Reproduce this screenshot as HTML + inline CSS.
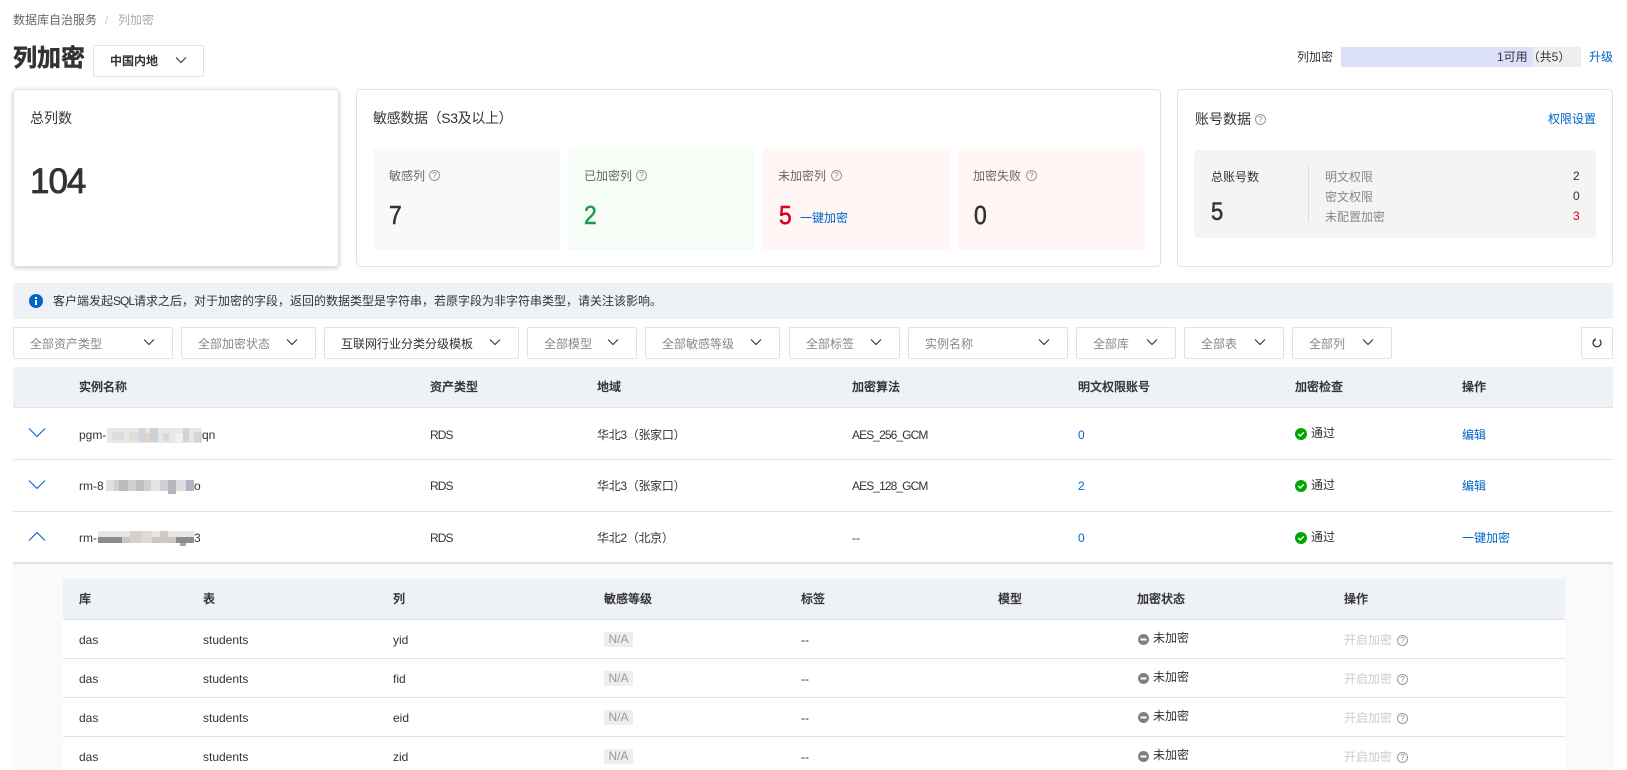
<!DOCTYPE html>
<html lang="zh-CN"><head><meta charset="utf-8"><title>列加密</title>
<style>
html,body{margin:0;padding:0;background:#fff}
body{width:1627px;height:770px;overflow:hidden;position:relative;font:12px/20px "Liberation Sans","Noto Sans CJK SC",sans-serif;color:#333}
.a{position:absolute;box-sizing:border-box}
.t{position:absolute;white-space:nowrap;height:20px;line-height:20px}
.b{font-weight:500;-webkit-text-stroke:.25px #333}
.l{color:#0064c8}
.card{position:absolute;box-sizing:border-box;background:#fff;border:1px solid #e3e3e3;border-radius:4px}
.sel{position:absolute;box-sizing:border-box;top:327px;height:32px;border:1px solid #e3e3e3;border-radius:2px;background:#fff;color:#888;line-height:32px;padding-left:16px;white-space:nowrap}
.sel svg{position:absolute;right:17px;top:10px}
.h{position:absolute;box-sizing:border-box;width:11px;height:11px;border:1px solid #999;border-radius:50%;color:#888;font-size:8px;line-height:9px;text-align:center}
.sub{position:absolute;top:149px;height:101px;width:187px}
.lb{color:#666}
.v{font-size:26px;-webkit-text-stroke:.55px currentColor;transform:scaleX(.88);transform-origin:left center}
.n{letter-spacing:-.9px}
.s{position:absolute;box-sizing:border-box;width:11px;height:11px;border-radius:50%}
.tag{position:absolute;left:604px;width:29px;height:15px;background:#eee;color:#999;line-height:15px;text-align:center;border-radius:1px}
.d{color:#ccc}
.rl{position:absolute;height:1px;background:#e3e3e3}
.r{letter-spacing:-.3px}
</style></head><body>

<div class="t" style="left:13px;top:10px;color:#666">数据库自治服务</div>
<div class="t" style="left:105px;top:10px;color:#ccc">/</div>
<div class="t" style="left:118px;top:10px;color:#aaa">列加密</div>

<div class="t" style="left:13px;top:44px;font-size:24px;line-height:30px;height:30px;font-weight:700;-webkit-text-stroke:.5px #333">列加密</div>
<div class="a" style="left:93px;top:45px;width:111px;height:32px;border:1px solid #e3e3e3;border-radius:2px"></div>
<div class="t b" style="left:110px;top:51px">中国内地</div>
<svg class="a" style="left:175px;top:56px" width="12" height="8" viewBox="0 0 12 8"><path d="M1 1.5l5 5 5-5" fill="none" stroke="#333" stroke-width="1.1"/></svg>

<div class="t" style="left:1297px;top:47px">列加密</div>
<div class="a" style="left:1341px;top:47px;width:240px;height:20px;background:#eee"></div>
<div class="a" style="left:1341px;top:47px;width:192px;height:20px;background:#dde0fb"></div>
<div class="t" style="left:1497px;top:47px">1可用（共5）</div>
<div class="t l" style="left:1589px;top:47px">升级</div>

<!-- card 1 -->
<div class="card" style="left:13px;top:89px;width:326px;height:178px;box-shadow:0 1px 5px rgba(0,0,0,.22)"></div>
<div class="t" style="left:30px;top:108px;font-size:14px">总列数</div>
<div class="t" style="left:30px;top:160px;font-size:35px;line-height:44px;height:44px;letter-spacing:-1px;-webkit-text-stroke:.8px #333">104</div>

<!-- card 2 -->
<div class="card" style="left:356px;top:89px;width:805px;height:178px"></div>
<div class="t" style="left:373px;top:108px;font-size:14px;letter-spacing:-.35px">敏感数据（S3及以上）</div>
<div class="sub" style="left:373px;background:#f9f9f9"></div>
<div class="sub" style="left:568px;background:#f6fdf6"></div>
<div class="sub" style="left:763px;background:#fff6f5"></div>
<div class="sub" style="left:958px;background:#fff6f5"></div>
<div class="t lb" style="left:389px;top:166px">敏感列</div><div class="h" style="left:429px;top:170px">?</div>
<div class="t lb" style="left:584px;top:166px">已加密列</div><div class="h" style="left:636px;top:170px">?</div>
<div class="t lb" style="left:778px;top:166px">未加密列</div><div class="h" style="left:831px;top:170px">?</div>
<div class="t lb" style="left:973px;top:166px">加密失败</div><div class="h" style="left:1026px;top:170px">?</div>
<div class="t v" style="left:389px;top:205px">7</div>
<div class="t v" style="left:584px;top:205px;color:#1d9a52">2</div>
<div class="t v" style="left:779px;top:205px;color:#d9001b">5</div>
<div class="t l" style="left:800px;top:208px">一键加密</div>
<div class="t v" style="left:974px;top:205px">0</div>

<!-- card 3 -->
<div class="card" style="left:1177px;top:89px;width:436px;height:178px"></div>
<div class="t" style="left:1195px;top:109px;font-size:14px">账号数据</div><div class="h" style="left:1255px;top:114px">?</div>
<div class="t l" style="left:1548px;top:109px">权限设置</div>
<div class="a" style="left:1194px;top:150px;width:402px;height:88px;background:#f4f4f4;border-radius:4px"></div>
<div class="t" style="left:1211px;top:167px">总账号数</div>
<div class="t v" style="left:1211px;top:202px;font-size:25px">5</div>
<div class="a" style="left:1308px;top:166px;width:1px;height:56px;background:#ddd"></div>
<div class="t" style="left:1325px;top:167px;color:#888">明文权限</div>
<div class="t" style="left:1325px;top:187px;color:#888">密文权限</div>
<div class="t" style="left:1325px;top:207px;color:#888">未配置加密</div>
<div class="t" style="left:1573px;top:166px">2</div>
<div class="t" style="left:1573px;top:186px">0</div>
<div class="t" style="left:1573px;top:206px;color:#d9001b">3</div>

<!-- alert -->
<div class="a" style="left:13px;top:283px;width:1600px;height:36px;background:#eef1f6"></div>
<svg class="a" style="left:29px;top:294px" width="14" height="14" viewBox="0 0 14 14"><circle cx="7" cy="7" r="7" fill="#0064c8"/><rect x="6" y="6" width="2" height="5" fill="#fff"/><rect x="6" y="3" width="2" height="2" fill="#fff"/></svg>
<div class="t" style="left:53px;top:291px">客户端发起<span style="letter-spacing:-1px">SQL</span>请求之后，对于加密的字段，返回的数据类型是字符串，若原字段为非字符串类型，请关注该影响。</div>

<!-- filters -->
<div class="sel" style="left:13px;width:160px">全部资产类型<svg width="12" height="8" viewBox="0 0 12 8"><path d="M1 1.5l5 5 5-5" fill="none" stroke="#333" stroke-width="1.1"/></svg></div>
<div class="sel" style="left:181px;width:135px">全部加密状态<svg width="12" height="8" viewBox="0 0 12 8"><path d="M1 1.5l5 5 5-5" fill="none" stroke="#333" stroke-width="1.1"/></svg></div>
<div class="sel" style="left:324px;width:195px;color:#333">互联网行业分类分级模板<svg width="12" height="8" viewBox="0 0 12 8"><path d="M1 1.5l5 5 5-5" fill="none" stroke="#333" stroke-width="1.1"/></svg></div>
<div class="sel" style="left:527px;width:110px">全部模型<svg width="12" height="8" viewBox="0 0 12 8"><path d="M1 1.5l5 5 5-5" fill="none" stroke="#333" stroke-width="1.1"/></svg></div>
<div class="sel" style="left:645px;width:135px">全部敏感等级<svg width="12" height="8" viewBox="0 0 12 8"><path d="M1 1.5l5 5 5-5" fill="none" stroke="#333" stroke-width="1.1"/></svg></div>
<div class="sel" style="left:789px;width:111px">全部标签<svg width="12" height="8" viewBox="0 0 12 8"><path d="M1 1.5l5 5 5-5" fill="none" stroke="#333" stroke-width="1.1"/></svg></div>
<div class="sel" style="left:908px;width:160px">实例名称<svg width="12" height="8" viewBox="0 0 12 8"><path d="M1 1.5l5 5 5-5" fill="none" stroke="#333" stroke-width="1.1"/></svg></div>
<div class="sel" style="left:1076px;width:100px">全部库<svg width="12" height="8" viewBox="0 0 12 8"><path d="M1 1.5l5 5 5-5" fill="none" stroke="#333" stroke-width="1.1"/></svg></div>
<div class="sel" style="left:1184px;width:100px">全部表<svg width="12" height="8" viewBox="0 0 12 8"><path d="M1 1.5l5 5 5-5" fill="none" stroke="#333" stroke-width="1.1"/></svg></div>
<div class="sel" style="left:1292px;width:100px">全部列<svg width="12" height="8" viewBox="0 0 12 8"><path d="M1 1.5l5 5 5-5" fill="none" stroke="#333" stroke-width="1.1"/></svg></div>
<div class="a" style="left:1581px;top:327px;width:32px;height:32px;border:1px solid #e3e3e3;border-radius:2px"></div>
<svg class="a" style="left:1591px;top:337px" width="12" height="12" viewBox="0 0 12 12"><path d="M8.6 2.7A4 4 0 1 1 3.6 2.6" fill="none" stroke="#333" stroke-width="1.3"/><path d="M4.6 .6v3.4H1.6z" fill="#333"/></svg>

<!-- main table -->
<div class="a" style="left:13px;top:367px;width:1600px;height:41px;background:#eef1f6;border-bottom:1px solid #e3e3e3"></div>
<div class="t b" style="left:79px;top:377px">实例名称</div>
<div class="t b" style="left:430px;top:377px">资产类型</div>
<div class="t b" style="left:597px;top:377px">地域</div>
<div class="t b" style="left:852px;top:377px">加密算法</div>
<div class="t b" style="left:1078px;top:377px">明文权限账号</div>
<div class="t b" style="left:1295px;top:377px">加密检查</div>
<div class="t b" style="left:1462px;top:377px">操作</div>

<div class="rl" style="left:13px;top:459px;width:1600px"></div>
<div class="rl" style="left:13px;top:511px;width:1600px"></div>

<svg class="a" style="left:28px;top:427px" width="18" height="11" viewBox="0 0 18 11"><path d="M1 1.5l8 8 8-8" fill="none" stroke="#0064c8" stroke-width="1.1"/></svg>
<svg class="a" style="left:28px;top:479px" width="18" height="11" viewBox="0 0 18 11"><path d="M1 1.5l8 8 8-8" fill="none" stroke="#0064c8" stroke-width="1.1"/></svg>
<svg class="a" style="left:28px;top:531px" width="18" height="11" viewBox="0 0 18 11"><path d="M1 9.5l8-8 8 8" fill="none" stroke="#0064c8" stroke-width="1.1"/></svg>

<div class="t" style="left:79px;top:425px">pgm-</div>
<svg class="a" style="left:107px;top:428px" width="95" height="15" shape-rendering="crispEdges"><rect width="95" height="15" y="0" fill="#e9e7e6"/><rect x="5" y="4" width="12" height="8" fill="#dcdcdc"/><rect x="22" y="4" width="10" height="9" fill="#e2dcd6"/><rect x="32" width="6" height="14" fill="#d3d3da"/><rect x="38" y="5" width="5" height="9" fill="#e2d5c8"/><rect x="43" y="0" width="8" height="14" fill="#cfd0d6"/><rect x="56" y="5" width="6" height="8" fill="#d8d8d8"/><rect x="68" y="5" width="8" height="9" fill="#f2f0ed"/><rect x="76" y="0" width="6" height="14" fill="#d4d4d8"/><rect x="87" y="4" width="8" height="10" fill="#d3d6dc"/></svg>
<div class="t" style="left:202px;top:425px">qn</div>
<div class="t" style="left:79px;top:476px">rm-8</div>
<svg class="a" style="left:106px;top:480px" width="88" height="14" shape-rendering="crispEdges"><rect width="88" height="11" y="0" fill="#cfcfd2"/><rect x="0" width="8" height="11" fill="#e0e0e0"/><rect x="13" width="9" height="11" fill="#b9bcbf"/><rect x="30" width="8" height="11" fill="#bdbfc2"/><rect x="45" width="9" height="11" fill="#e4e4e2"/><rect x="62" width="8" height="14" fill="#b9b4bb"/><rect x="70" width="10" height="11" fill="#dcdce2"/><rect x="80" width="8" height="11" fill="#b2b4c4"/></svg>
<div class="t" style="left:194px;top:476px">o</div>
<div class="t" style="left:79px;top:528px">rm-</div>
<svg class="a" style="left:98px;top:531px" width="96" height="15" shape-rendering="crispEdges"><rect width="96" height="6" y="0" fill="#e8e6e4"/><rect width="96" height="6" y="6" fill="#c9c6c6"/><rect x="0" y="6" width="24" height="6" fill="#8f8a8c"/><rect x="32" width="12" height="12" fill="#d6cfca"/><rect x="44" width="10" height="12" fill="#e2dad2"/><rect x="62" width="8" height="12" fill="#cfc9c4"/><rect x="78" y="6" width="18" height="6" fill="#8f8c90"/><rect x="82" y="12" width="6" height="3" fill="#a9a5a8"/></svg>
<div class="t" style="left:194px;top:528px">3</div>

<div class="t n" style="left:430px;top:425px">RDS</div><div class="t n" style="left:430px;top:476px">RDS</div><div class="t n" style="left:430px;top:528px">RDS</div>
<div class="t r" style="left:597px;top:425px">华北3（张家口）</div><div class="t r" style="left:597px;top:476px">华北3（张家口）</div><div class="t r" style="left:597px;top:528px">华北2（北京）</div>
<div class="t n" style="left:852px;top:425px">AES_256_GCM</div><div class="t n" style="left:852px;top:476px">AES_128_GCM</div><div class="t" style="left:852px;top:528px">--</div>
<div class="t l" style="left:1078px;top:425px">0</div><div class="t l" style="left:1078px;top:476px">2</div><div class="t l" style="left:1078px;top:528px">0</div>

<svg class="a" style="left:1295px;top:428px" width="12" height="12" viewBox="0 0 12 12"><circle cx="6" cy="6" r="6" fill="#00a700"/><path d="M3.2 6l2 2 3.6-3.6" fill="none" stroke="#fff" stroke-width="1.4"/></svg>
<svg class="a" style="left:1295px;top:480px" width="12" height="12" viewBox="0 0 12 12"><circle cx="6" cy="6" r="6" fill="#00a700"/><path d="M3.2 6l2 2 3.6-3.6" fill="none" stroke="#fff" stroke-width="1.4"/></svg>
<svg class="a" style="left:1295px;top:532px" width="12" height="12" viewBox="0 0 12 12"><circle cx="6" cy="6" r="6" fill="#00a700"/><path d="M3.2 6l2 2 3.6-3.6" fill="none" stroke="#fff" stroke-width="1.4"/></svg>
<div class="t" style="left:1311px;top:423px">通过</div><div class="t" style="left:1311px;top:475px">通过</div><div class="t" style="left:1311px;top:527px">通过</div>
<div class="t l" style="left:1462px;top:425px">编辑</div><div class="t l" style="left:1462px;top:476px">编辑</div><div class="t l" style="left:1462px;top:528px">一键加密</div>

<!-- expanded -->
<div class="a" style="left:13px;top:562px;width:1600px;height:208px;background:#fafafa;box-shadow:inset 0 3px 3px -2px rgba(0,0,0,.18)"></div>
<div class="a" style="left:63px;top:579px;width:1502px;height:191px;background:#fff"></div>
<div class="a" style="left:63px;top:579px;width:1502px;height:41px;background:#eef1f6;border-bottom:1px solid #e3e3e3"></div>
<div class="t b" style="left:79px;top:589px">库</div>
<div class="t b" style="left:203px;top:589px">表</div>
<div class="t b" style="left:393px;top:589px">列</div>
<div class="t b" style="left:604px;top:589px">敏感等级</div>
<div class="t b" style="left:801px;top:589px">标签</div>
<div class="t b" style="left:998px;top:589px">模型</div>
<div class="t b" style="left:1137px;top:589px">加密状态</div>
<div class="t b" style="left:1344px;top:589px">操作</div>
<div class="rl" style="left:63px;top:658px;width:1502px"></div>
<div class="rl" style="left:63px;top:697px;width:1502px"></div>
<div class="rl" style="left:63px;top:736px;width:1502px"></div>

<div class="t" style="left:79px;top:630px">das</div><div class="t" style="left:203px;top:630px">students</div><div class="t" style="left:393px;top:630px">yid</div><div class="tag" style="top:632px">N/A</div><div class="t" style="left:801px;top:630px">--</div>
<div class="t" style="left:79px;top:669px">das</div><div class="t" style="left:203px;top:669px">students</div><div class="t" style="left:393px;top:669px">fid</div><div class="tag" style="top:671px">N/A</div><div class="t" style="left:801px;top:669px">--</div>
<div class="t" style="left:79px;top:708px">das</div><div class="t" style="left:203px;top:708px">students</div><div class="t" style="left:393px;top:708px">eid</div><div class="tag" style="top:710px">N/A</div><div class="t" style="left:801px;top:708px">--</div>
<div class="t" style="left:79px;top:747px">das</div><div class="t" style="left:203px;top:747px">students</div><div class="t" style="left:393px;top:747px">zid</div><div class="tag" style="top:749px">N/A</div><div class="t" style="left:801px;top:747px">--</div>

<svg class="a" style="left:1138px;top:634px" width="11" height="11" viewBox="0 0 11 11"><circle cx="5.5" cy="5.5" r="5.5" fill="#808080"/><rect x="2.5" y="4.5" width="6" height="2" fill="#fff"/></svg>
<svg class="a" style="left:1138px;top:673px" width="11" height="11" viewBox="0 0 11 11"><circle cx="5.5" cy="5.5" r="5.5" fill="#808080"/><rect x="2.5" y="4.5" width="6" height="2" fill="#fff"/></svg>
<svg class="a" style="left:1138px;top:712px" width="11" height="11" viewBox="0 0 11 11"><circle cx="5.5" cy="5.5" r="5.5" fill="#808080"/><rect x="2.5" y="4.5" width="6" height="2" fill="#fff"/></svg>
<svg class="a" style="left:1138px;top:751px" width="11" height="11" viewBox="0 0 11 11"><circle cx="5.5" cy="5.5" r="5.5" fill="#808080"/><rect x="2.5" y="4.5" width="6" height="2" fill="#fff"/></svg>
<div class="t" style="left:1153px;top:628px">未加密</div><div class="t" style="left:1153px;top:667px">未加密</div><div class="t" style="left:1153px;top:706px">未加密</div><div class="t" style="left:1153px;top:745px">未加密</div>

<div class="t d" style="left:1344px;top:630px">开启加密</div><div class="h" style="left:1397px;top:635px">?</div>
<div class="t d" style="left:1344px;top:669px">开启加密</div><div class="h" style="left:1397px;top:674px">?</div>
<div class="t d" style="left:1344px;top:708px">开启加密</div><div class="h" style="left:1397px;top:713px">?</div>
<div class="t d" style="left:1344px;top:747px">开启加密</div><div class="h" style="left:1397px;top:752px">?</div>

</body></html>
